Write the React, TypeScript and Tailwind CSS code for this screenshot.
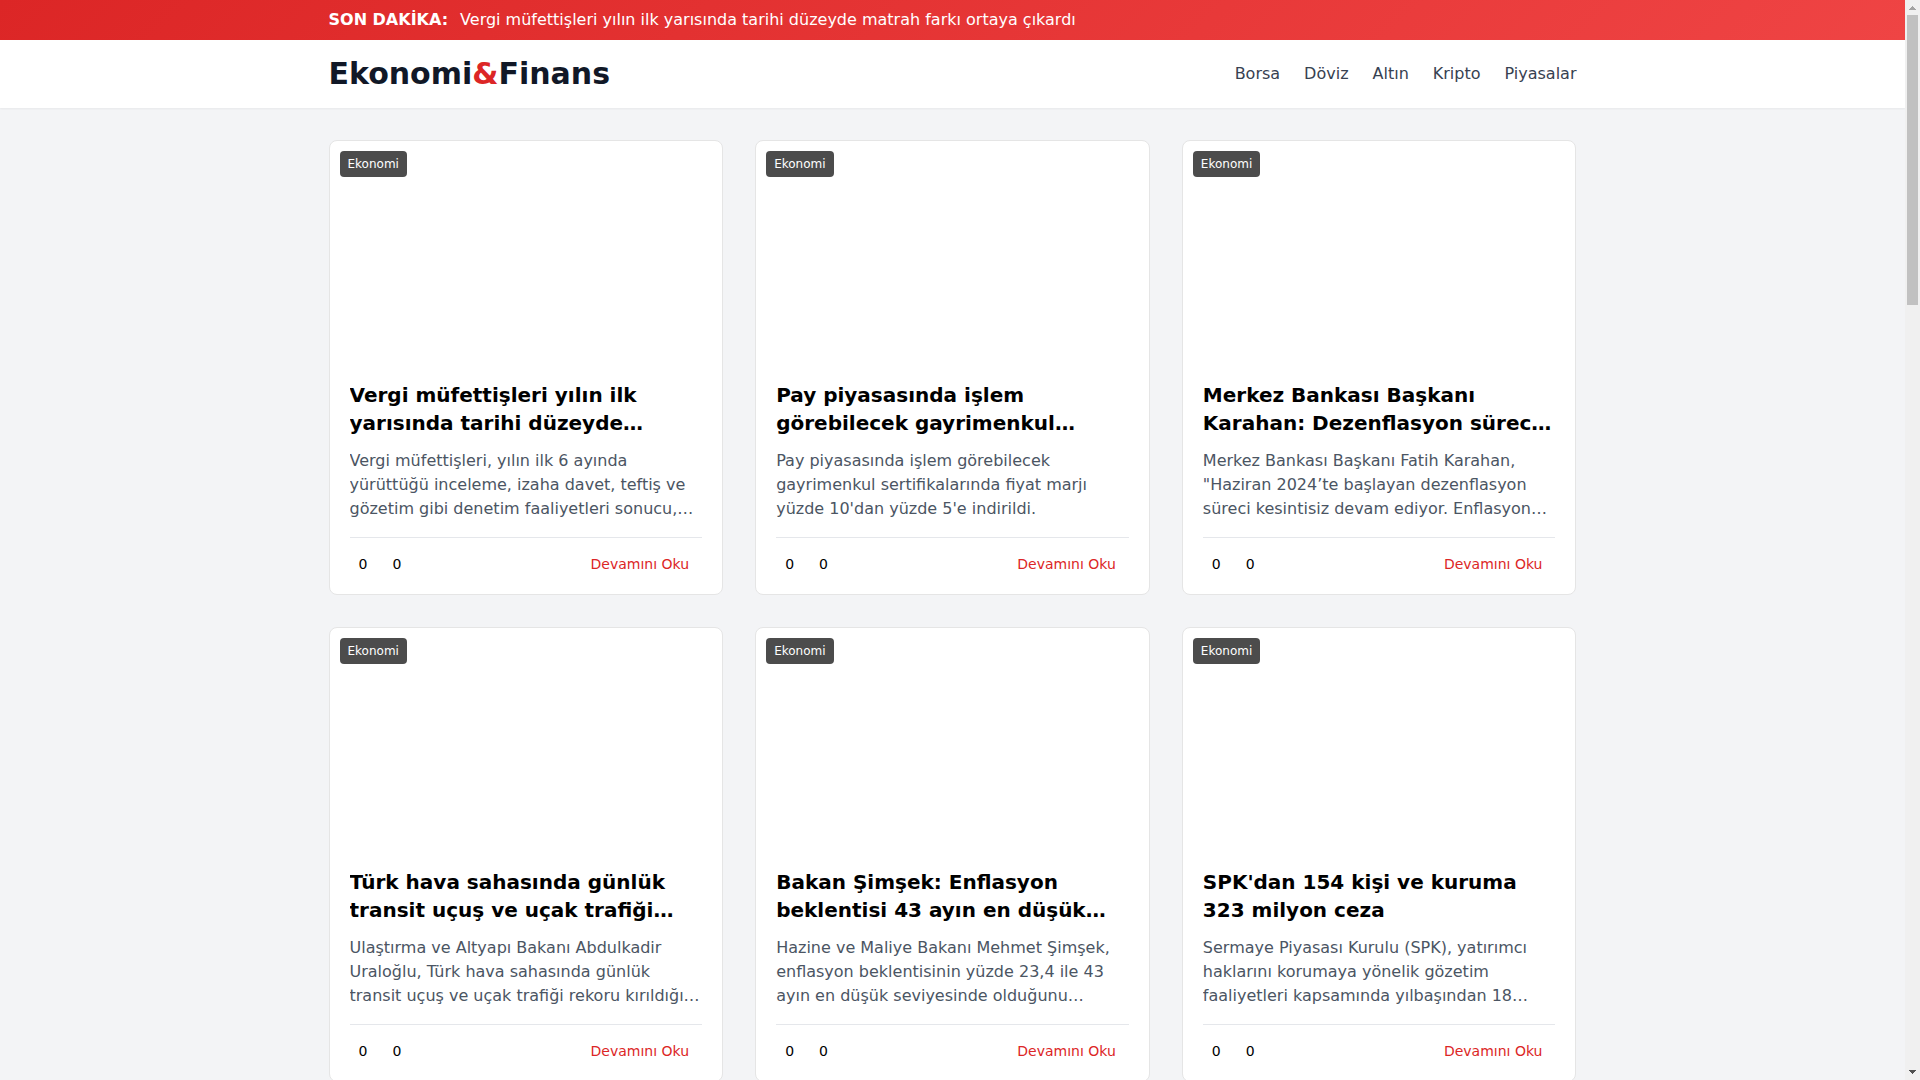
import React from 'react';

interface NewsItem {
  id: number;
  category: string;
  title: string;
  summary: string;
  likes: number;
  comments: number;
}

const navItems = ['Borsa', 'Döviz', 'Altın', 'Kripto', 'Piyasalar'];

const news: NewsItem[] = [
  {
    id: 1,
    category: 'Ekonomi',
    title: 'Vergi müfettişleri yılın ilk yarısında tarihi düzeyde…',
    summary:
      'Vergi müfettişleri, yılın ilk 6 ayında yürüttüğü inceleme, izaha davet, teftiş ve gözetim gibi denetim faaliyetleri sonucu,…',
    likes: 0,
    comments: 0,
  },
  {
    id: 2,
    category: 'Ekonomi',
    title: 'Pay piyasasında işlem görebilecek gayrimenkul…',
    summary: "Pay piyasasında işlem görebilecek gayrimenkul sertifikalarında fiyat marjı yüzde 10'dan yüzde 5'e indirildi.",
    likes: 0,
    comments: 0,
  },
  {
    id: 3,
    category: 'Ekonomi',
    title: 'Merkez Bankası Başkanı Karahan: Dezenflasyon sürec…',
    summary:
      'Merkez Bankası Başkanı Fatih Karahan, "Haziran 2024’te başlayan dezenflasyon süreci kesintisiz devam ediyor. Enflasyon…',
    likes: 0,
    comments: 0,
  },
  {
    id: 4,
    category: 'Ekonomi',
    title: 'Türk hava sahasında günlük transit uçuş ve uçak trafiği…',
    summary:
      'Ulaştırma ve Altyapı Bakanı Abdulkadir Uraloğlu, Türk hava sahasında günlük transit uçuş ve uçak trafiği rekoru kırıldığı…',
    likes: 0,
    comments: 0,
  },
  {
    id: 5,
    category: 'Ekonomi',
    title: 'Bakan Şimşek: Enflasyon beklentisi 43 ayın en düşük…',
    summary:
      'Hazine ve Maliye Bakanı Mehmet Şimşek, enflasyon beklentisinin yüzde 23,4 ile 43 ayın en düşük seviyesinde olduğunu…',
    likes: 0,
    comments: 0,
  },
  {
    id: 6,
    category: 'Ekonomi',
    title: "SPK'dan 154 kişi ve kuruma 323 milyon ceza",
    summary:
      'Sermaye Piyasası Kurulu (SPK), yatırımcı haklarını korumaya yönelik gözetim faaliyetleri kapsamında yılbaşından 18…',
    likes: 0,
    comments: 0,
  },
];

const NewsCard: React.FC<{ item: NewsItem }> = ({ item }) => (
  <article className="flex flex-col bg-white border border-[#e5e5e5] rounded-lg overflow-hidden">
    <div className="relative h-[220px]">
      <span className="absolute top-[10px] left-[10px] px-2 py-[5px] rounded bg-black/70 text-xs text-white">
        {item.category}
      </span>
    </div>
    <div className="p-5">
      <h2 className="text-xl font-bold text-black line-clamp-2 mb-3">{item.title}</h2>
      <p className="text-base text-[#4b5563] line-clamp-3 mb-4">{item.summary}</p>
      <div className="flex items-center justify-between border-t border-[#e5e7eb] pt-4 text-sm">
        <div className="flex gap-[7px]">
          <button type="button" aria-label="Beğen" className="px-[9px] text-black cursor-pointer">
            {item.likes}
          </button>
          <button type="button" aria-label="Yorumlar" className="px-[9px] text-black cursor-pointer">
            {item.comments}
          </button>
        </div>
        <a href="#" className="px-[13px] text-[#dc2626] hover:underline">
          Devamını Oku
        </a>
      </div>
    </div>
  </article>
);

const ScrollBar = () => (
  <div className="flex flex-col w-[15px] shrink-0 bg-[#f0f0f0]" aria-hidden="true">
    <svg className="h-[15px] w-[15px] shrink-0" viewBox="0 0 15 15" shapeRendering="crispEdges" fill="#a3a3a3">
      <path d="M7 6h1v1h1v1h1v1h1v1H4V9h1V8h1V7h1z" />
    </svg>
    <div className="flex-1 px-[2px]">
      <div className="h-[27.6%] bg-[#c1c1c1]" />
    </div>
    <svg className="h-[15px] w-[15px] shrink-0" viewBox="0 0 15 15" shapeRendering="crispEdges" fill="#505050">
      <path d="M4 5h7v1h-1v1H9v1H8v1H7V8H6V7H5V6H4z" />
    </svg>
  </div>
);

export default function App() {
  return (
    <div className="flex h-screen overflow-hidden bg-[#f3f4f6] font-['DejaVu_Sans',sans-serif] text-base">
      <div className="flex-1 min-w-0 overflow-hidden">
        <div className="bg-[linear-gradient(135deg,#dc2626,#ef4444)] text-white py-2">
          <div className="max-w-7xl mx-auto px-4 flex items-center gap-3">
            <span className="font-bold">SON DAKİKA:</span>
            <span>Vergi müfettişleri yılın ilk yarısında tarihi düzeyde matrah farkı ortaya çıkardı</span>
          </div>
        </div>

        <header className="bg-white shadow-xs">
          <div className="max-w-7xl mx-auto px-4 py-4 flex items-center justify-between">
            <h1 className="text-3xl font-bold text-[#111827]">
              Ekonomi<span className="text-[#dc2626]">&amp;</span>Finans
            </h1>
            <nav className="flex gap-6">
              {navItems.map((label) => (
                <a key={label} href="#" className="text-[#374151] hover:text-[#dc2626]">
                  {label}
                </a>
              ))}
            </nav>
          </div>
        </header>

        <main className="max-w-7xl mx-auto px-4 py-8">
          <div className="grid grid-cols-1 md:grid-cols-2 lg:grid-cols-3 gap-8">
            {news.map((item) => (
              <NewsCard key={item.id} item={item} />
            ))}
          </div>
        </main>
      </div>
      <ScrollBar />
    </div>
  );
}
